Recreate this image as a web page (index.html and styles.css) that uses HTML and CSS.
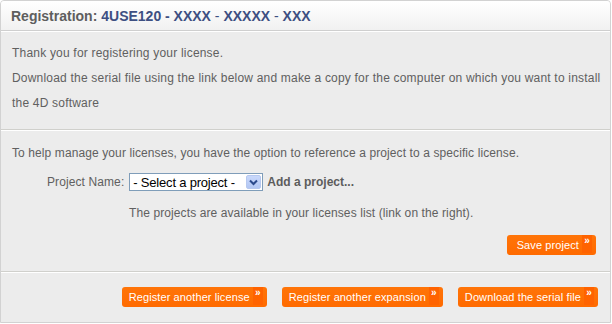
FILE: index.html
```html
<!DOCTYPE html>
<html lang="en">
<head>
    <meta charset="UTF-8">
    <meta name="viewport" content="width=device-width, initial-scale=1.0">
    <title>Registration</title>
    <link rel="stylesheet" href="styles.css">
</head>
<body>
    <div class="frame">
        <div class="header">
            <h1>Registration: <span class="serial">4USE120 - XXXX <span class="dash">-</span> XXXXX <span class="dash">-</span> XXX</span></h1>
        </div>

        <div class="section intro">
            <p>Thank you for registering your license.</p>
            <p>Download the serial file using the link below and make a copy for the computer on which you want to install the 4D software</p>
        </div>

        <div class="section project">
            <p>To help manage your licenses, you have the option to reference a project to a specific license.</p>
            <div class="project-row">
                <label>Project Name:</label>
                <div class="select">
                    <span class="select-text">- Select a project -</span>
                    <span class="select-arrow">
                        <svg width="9" height="7" viewBox="0 0 9 7"><path d="M1 1.5 L4.5 5 L8 1.5" fill="none" stroke="#2b4a8c" stroke-width="2"/></svg>
                    </span>
                </div>
                <a class="add-link">Add a project...</a>
            </div>
            <p class="hint">The projects are available in your licenses list (link on the right).</p>
            <div class="actions">
                <button class="btn">Save project <span class="arr">»</span></button>
            </div>
        </div>

        <div class="section footer">
            <button class="btn">Register another license <span class="arr">»</span></button>
            <button class="btn">Register another expansion <span class="arr">»</span></button>
            <button class="btn">Download the serial file <span class="arr">»</span></button>
        </div>
    </div>
</body>
</html>
```

FILE: styles.css
```css
body {
    margin: 0;
    background-color: #ffffff;
    font-family: "Liberation Sans", Arial, sans-serif;
    font-size: 12px;
    color: #606060;
}

.frame {
    width: 611px;
    height: 323px;
    box-sizing: border-box;
    border: 1px solid #d2d2d2;
    border-radius: 4px 4px 0 0;
    background-color: #ececec;
    overflow: hidden;
}

.header {
    height: 29px;
    padding-left: 10px;
    background: linear-gradient(#ffffff, #f1f1f1);
    border-bottom: 1px solid #cfcfcf;
    display: flex;
    align-items: center;
}

h1 {
    margin: 0;
    padding-top: 1px;
    font-size: 14px;
    font-weight: bold;
    color: #5e5e5e;
}

.serial {
    color: #3d4f82;
}

.dash {
    font-weight: normal;
}

.section {
    border-top: 1px solid #ffffff;
    padding: 0 0 0 11px;
}

.section p {
    margin: 0;
    line-height: 25px;
    letter-spacing: 0.1px;
}

.intro {
    height: 99px;
    padding-top: 9px;
    box-sizing: border-box;
    border-bottom: 1px solid #d0d0cc;
}

.section.intro p {
    letter-spacing: 0.2px;
}

.project {
    height: 142px;
    padding-top: 10px;
    box-sizing: border-box;
    border-bottom: 1px solid #d0d0cc;
}

.project-row {
    display: flex;
    align-items: center;
    margin-top: 6px;
    padding-left: 35px;
    height: 20px;
}

.project-row label {
    margin-right: 5px;
    letter-spacing: 0.1px;
}

.select {
    width: 134px;
    height: 18px;
    box-sizing: border-box;
    border: 1px solid #7f9db9;
    background-color: #ffffff;
    display: flex;
    align-items: center;
    justify-content: space-between;
    padding: 0 1px 0 3px;
}

.select-text {
    font-size: 13px;
    color: #000000;
    letter-spacing: -0.2px;
}

.select-arrow {
    width: 15px;
    height: 14px;
    border-radius: 2px;
    background: linear-gradient(#c9d8fb, #b2c6f3);
    border: 1px solid #b6c8ef;
    box-sizing: border-box;
    display: flex;
    align-items: center;
    justify-content: center;
}

.add-link {
    margin-left: 4px;
    font-weight: bold;
    color: #5c5c5c;
}

.section .hint {
    margin-top: 9px;
    padding-left: 117px;
}

.actions {
    display: flex;
    justify-content: flex-end;
    padding-right: 14px;
    margin-top: 9px;
}

.btn {
    height: 20px;
    padding: 0 0 0 7px;
    border: none;
    border-radius: 3px;
    background: linear-gradient(#ff7408, #ff6a00);
    color: #ffffff;
    font-family: "Liberation Sans", Arial, sans-serif;
    font-size: 11px;
    letter-spacing: 0.1px;
    display: flex;
    align-items: center;
    cursor: pointer;
}

.actions .btn {
    padding-left: 10px;
}

.arr {
    width: 10px;
    height: 18px;
    margin: 0 4px 0 3px;
    background-color: #ff6300;
    font-size: 10px;
    font-weight: bold;
    line-height: 12px;
    text-align: center;
    align-self: flex-start;
}

.footer {
    padding-top: 14px;
    padding-right: 12px;
    display: flex;
    justify-content: flex-end;
    gap: 15px;
}
```
